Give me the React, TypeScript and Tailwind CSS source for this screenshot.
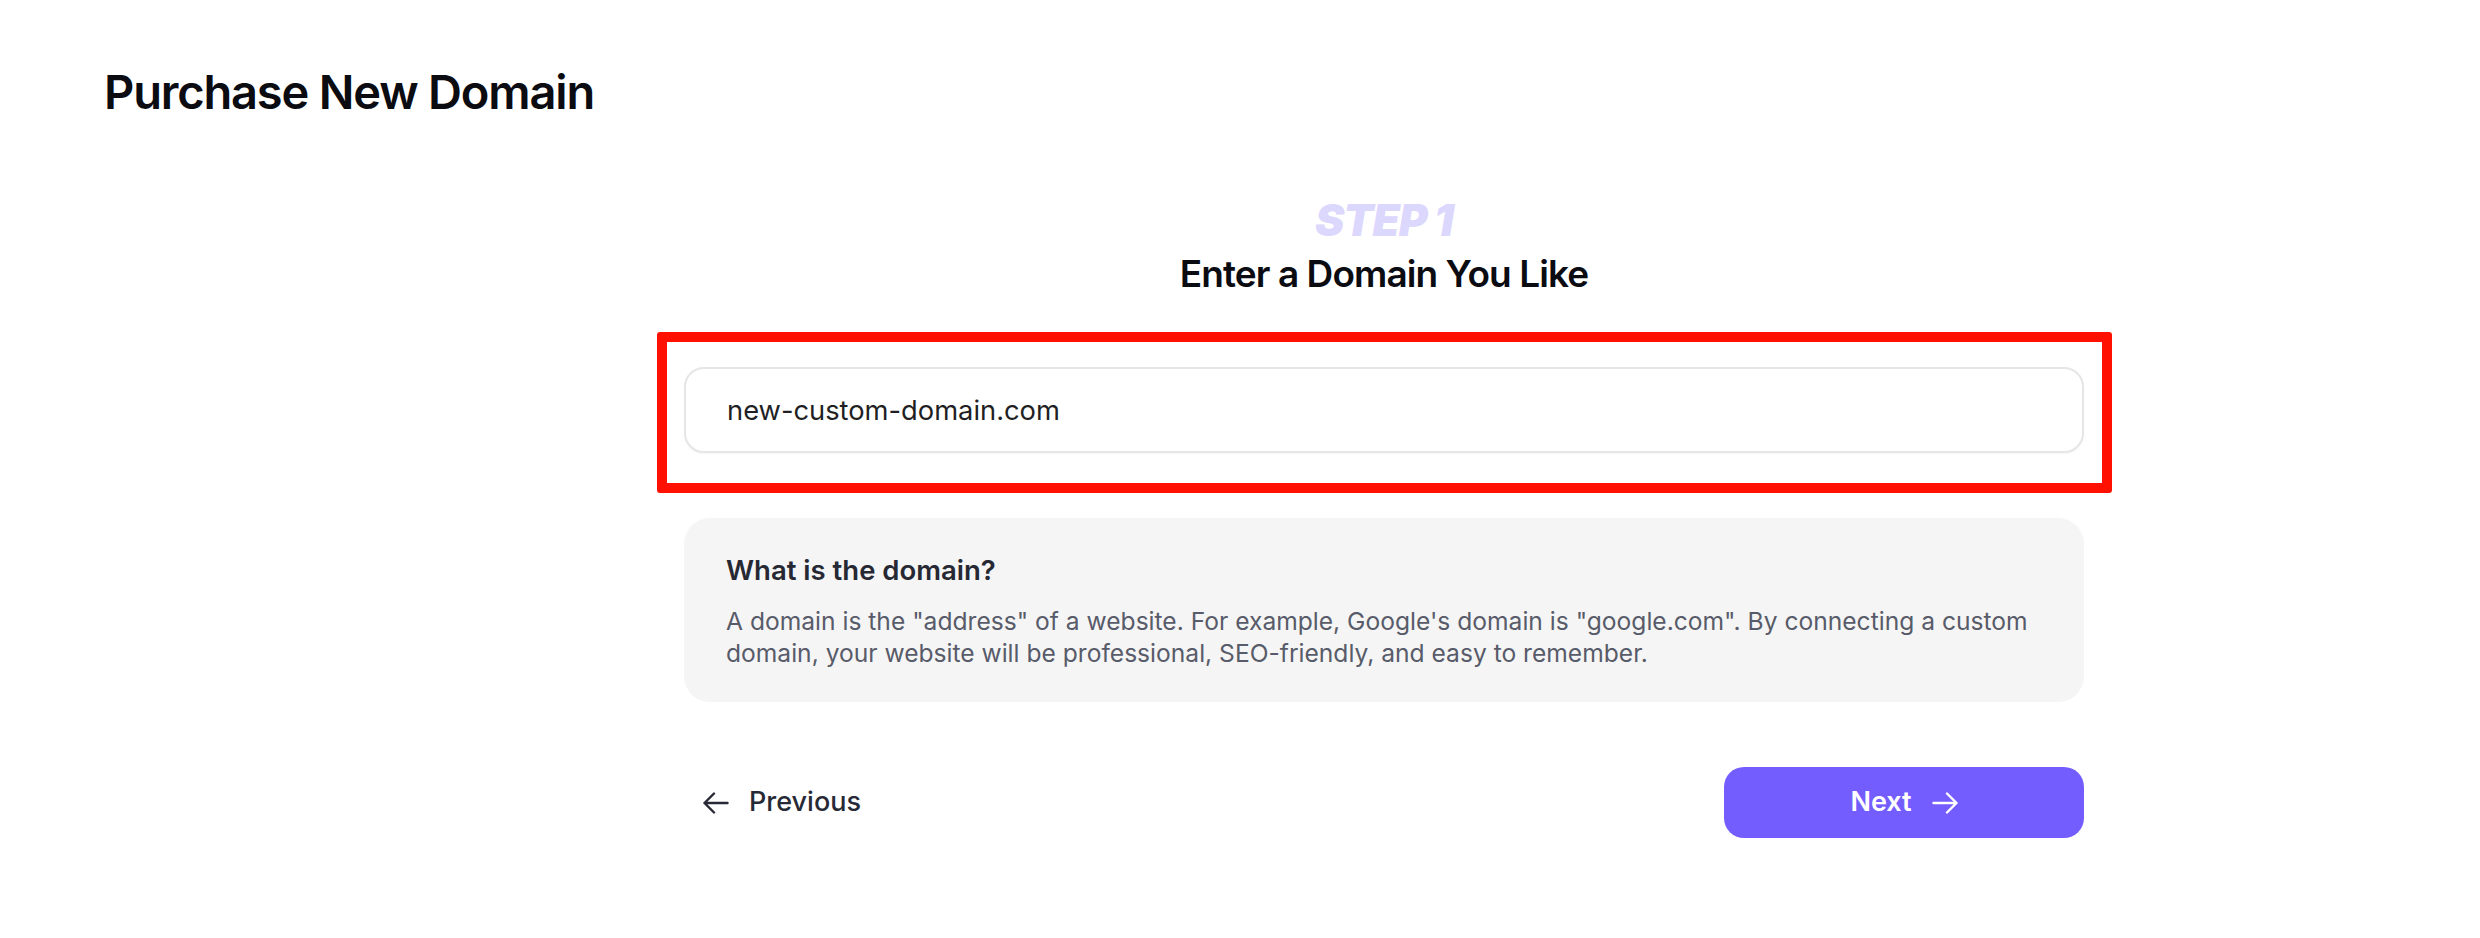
import React from 'react';

function Arrow({ dir, className }: { dir: 'left' | 'right'; className?: string }) {
  return (
    <svg
      width="26"
      height="22"
      viewBox="0 0 26 22"
      fill="none"
      stroke="currentColor"
      strokeWidth="2.4"
      strokeLinecap="round"
      strokeLinejoin="round"
      className={className}
    >
      {dir === 'right' ? (
        <path d="M1.5 11h23M15 1.5l9.5 9.5-9.5 9.5" />
      ) : (
        <path d="M24.5 11h-23M11 1.5L1.5 11l9.5 9.5" />
      )}
    </svg>
  );
}

export default function App() {
  return (
    <div className="min-h-screen bg-white font-['Inter',sans-serif] pb-20">
      {/* Page title */}
      <div className="pl-[104px] pt-[63px]">
        <h1 className="text-[47px] leading-[58px] font-semibold tracking-tight text-[#0b0b12]">
          Purchase New Domain
        </h1>
      </div>

      {/* Step content */}
      <div className="ml-[684px] w-[1400px] mt-[74px]">
        <div className="flex flex-col items-center">
          <div className="text-[44px] leading-[50px] font-black italic tracking-tight text-[#dcd7fd]">
            STEP 1
          </div>
          <h2 className="mt-[7px] text-[37px] leading-[44px] font-semibold tracking-tight text-[#0b0b12]">
            Enter a Domain You Like
          </h2>
        </div>

        {/* Domain input (with highlight frame) */}
        <div className="relative mt-[71px]">
          <input
            type="text"
            readOnly
            defaultValue="new-custom-domain.com"
            className="w-full h-[86px] rounded-[20px] border-2 border-[#e6e6e6] bg-white pl-[41px] pr-6 text-[27.3px] text-[#1f1f24] outline-none shadow-[0_1px_2px_rgba(0,0,0,0.04)]"
          />
          <div className="pointer-events-none absolute -left-[27px] -right-[28px] -top-[35px] -bottom-[40px] border-[10px] border-[#ff1000] rounded-[3px]" />
        </div>

        {/* Info */}
        <div className="mt-[65px] rounded-[26px] bg-[#f5f5f5] px-[42px] pt-[34px] pb-[33px]">
          <h3 className="text-[27.5px] leading-[36px] font-semibold text-[#262833]">What is the domain?</h3>
          <p className="mt-[17px] text-[24.6px] leading-[32px] text-[#585b69]">
            A domain is the "address" of a website. For example, Google's domain is "google.com". By connecting a custom
            domain, your website will be professional, SEO-friendly, and easy to remember.
          </p>
        </div>

        {/* Navigation */}
        <div className="mt-[65px] flex items-center justify-between">
          <button className="flex items-center gap-[20px] pl-[19px] text-[27px] font-medium text-[#272a36]">
            <Arrow dir="left" />
            Previous
          </button>
          <button className="w-[360px] h-[71px] rounded-[20px] bg-[#745dff] text-white flex items-center justify-center gap-[20px] text-[27px] font-semibold">
            Next
            <Arrow dir="right" />
          </button>
        </div>
      </div>
    </div>
  );
}
